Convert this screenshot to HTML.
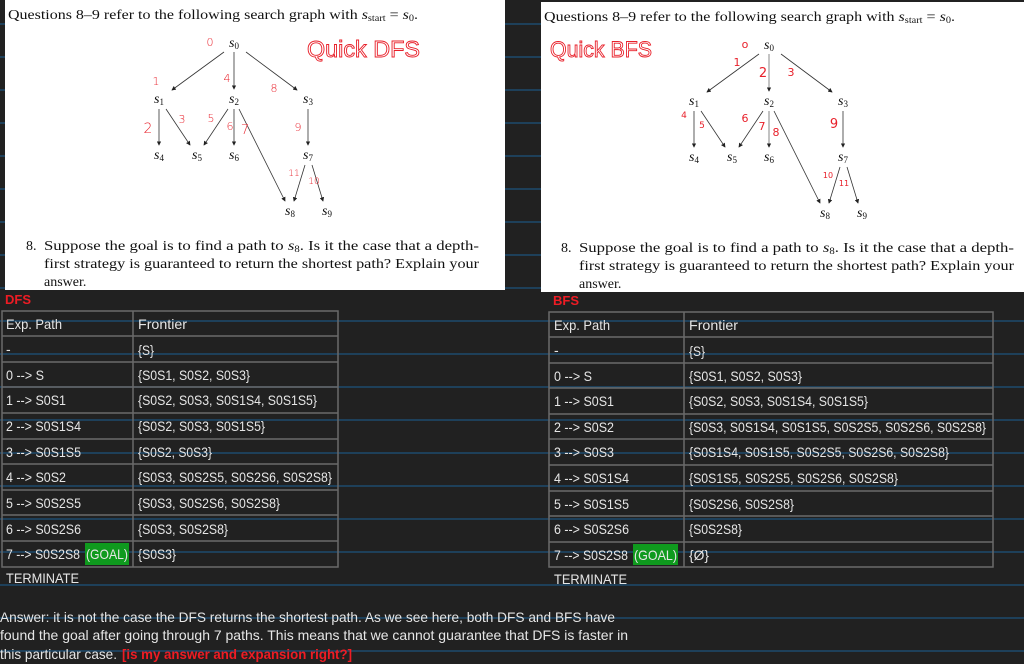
<!DOCTYPE html>
<html><head><meta charset="utf-8">
<style>
html,body{margin:0;padding:0;background:#212121;}
svg{display:block}
</style></head>
<body>
<svg width="1024" height="664" viewBox="0 0 1024 664" xmlns="http://www.w3.org/2000/svg">
<defs>
<marker id="ah" viewBox="0 0 6 6" refX="5" refY="3" markerWidth="4.5" markerHeight="4.5" markerUnits="userSpaceOnUse" orient="auto"><path d="M0,0 L6,3 L0,6 z" fill="#222"/></marker>
</defs>
<rect width="1024" height="664" fill="#212121"/>
<g stroke="#1d4a6d" stroke-width="1.5">
<line x1="0" y1="24" x2="1024" y2="24"/><line x1="0" y1="57" x2="1024" y2="57"/><line x1="0" y1="90" x2="1024" y2="90"/><line x1="0" y1="123" x2="1024" y2="123"/><line x1="0" y1="156" x2="1024" y2="156"/><line x1="0" y1="189" x2="1024" y2="189"/><line x1="0" y1="222" x2="1024" y2="222"/><line x1="0" y1="255" x2="1024" y2="255"/><line x1="0" y1="288" x2="1024" y2="288"/><line x1="0" y1="321" x2="1024" y2="321"/><line x1="0" y1="354" x2="1024" y2="354"/><line x1="0" y1="387" x2="1024" y2="387"/><line x1="0" y1="420" x2="1024" y2="420"/><line x1="0" y1="453" x2="1024" y2="453"/><line x1="0" y1="486" x2="1024" y2="486"/><line x1="0" y1="519" x2="1024" y2="519"/><line x1="0" y1="552" x2="1024" y2="552"/><line x1="0" y1="585" x2="1024" y2="585"/><line x1="0" y1="618" x2="1024" y2="618"/><line x1="0" y1="651" x2="1024" y2="651"/>
</g>

<rect x="5" y="0" width="500" height="290" fill="#fff"/>
<g font-family="Liberation Serif, serif" font-size="14" fill="#111">
<text x="8" y="19" textLength="410" lengthAdjust="spacingAndGlyphs">Questions 8–9 refer to the following search graph with <tspan font-style="italic">s</tspan><tspan font-size="9" dy="2">start</tspan><tspan dy="-2"> = </tspan><tspan font-style="italic">s</tspan><tspan font-size="9" dy="2">0</tspan><tspan dy="-2">.</tspan></text>
<text x="26" y="250">8.</text>
<text x="44" y="250" textLength="435" lengthAdjust="spacingAndGlyphs">Suppose the goal is to find a path to <tspan font-style="italic">s</tspan><tspan font-size="9" dy="2">8</tspan><tspan dy="-2">.  Is it the case that a depth-</tspan></text>
<text x="44" y="268" textLength="435" lengthAdjust="spacingAndGlyphs">first strategy is guaranteed to return the shortest path? Explain your</text>
<text x="44" y="286">answer.</text>
</g>
<g stroke="#333" stroke-width="0.8" marker-end="url(#ah)">
<line x1="224" y1="52" x2="172" y2="90"/><line x1="234" y1="52" x2="234" y2="89"/><line x1="246" y1="52" x2="297" y2="90"/>
<line x1="159" y1="109" x2="159" y2="145"/><line x1="166" y1="109" x2="190" y2="145"/><line x1="228" y1="109" x2="204" y2="145"/><line x1="234" y1="109" x2="234" y2="145"/><line x1="239" y1="109" x2="285" y2="201"/><line x1="308" y1="109" x2="308" y2="145"/><line x1="305" y1="165" x2="294" y2="201"/><line x1="312" y1="165" x2="323" y2="201"/>
</g>
<g font-family="Liberation Serif, serif" font-size="14" fill="#111" text-anchor="middle">
<text x="234" y="47"><tspan font-style="italic">s</tspan><tspan font-size="9" dy="2">0</tspan></text>
<text x="159" y="103"><tspan font-style="italic">s</tspan><tspan font-size="9" dy="2">1</tspan></text>
<text x="234" y="103"><tspan font-style="italic">s</tspan><tspan font-size="9" dy="2">2</tspan></text>
<text x="308" y="103"><tspan font-style="italic">s</tspan><tspan font-size="9" dy="2">3</tspan></text>
<text x="159" y="159"><tspan font-style="italic">s</tspan><tspan font-size="9" dy="2">4</tspan></text>
<text x="197" y="159"><tspan font-style="italic">s</tspan><tspan font-size="9" dy="2">5</tspan></text>
<text x="234" y="159"><tspan font-style="italic">s</tspan><tspan font-size="9" dy="2">6</tspan></text>
<text x="308" y="159"><tspan font-style="italic">s</tspan><tspan font-size="9" dy="2">7</tspan></text>
<text x="290" y="215"><tspan font-style="italic">s</tspan><tspan font-size="9" dy="2">8</tspan></text>
<text x="327" y="215"><tspan font-style="italic">s</tspan><tspan font-size="9" dy="2">9</tspan></text>
</g>
<g font-family="DejaVu Sans, sans-serif" font-size="11" fill="#e8202a" text-anchor="middle" font-weight="200">
<text x="210" y="46">0</text><text x="156" y="85">1</text><text x="227" y="82">4</text><text x="274" y="92">8</text>
<text x="148" y="133" font-size="14">2</text><text x="182" y="123">3</text><text x="211" y="122">5</text><text x="230" y="130">6</text><text x="245" y="134" font-size="13">7</text><text x="298" y="131">9</text><text x="294" y="176" font-size="9">11</text><text x="314" y="184" font-size="9">10</text>
</g>
<text x="307" y="57" font-family="Liberation Sans, sans-serif" font-size="23" fill="none" stroke="#e8202a" stroke-width="0.9" textLength="113" lengthAdjust="spacingAndGlyphs">Quick DFS</text>

<rect x="541" y="2" width="483" height="290" fill="#fff"/>
<g font-family="Liberation Serif, serif" font-size="14" fill="#111">
<text x="544" y="21" textLength="411" lengthAdjust="spacingAndGlyphs">Questions 8–9 refer to the following search graph with <tspan font-style="italic">s</tspan><tspan font-size="9" dy="2">start</tspan><tspan dy="-2"> = </tspan><tspan font-style="italic">s</tspan><tspan font-size="9" dy="2">0</tspan><tspan dy="-2">.</tspan></text>
<text x="561" y="252">8.</text>
<text x="579" y="252" textLength="435" lengthAdjust="spacingAndGlyphs">Suppose the goal is to find a path to <tspan font-style="italic">s</tspan><tspan font-size="9" dy="2">8</tspan><tspan dy="-2">.  Is it the case that a depth-</tspan></text>
<text x="579" y="270" textLength="435" lengthAdjust="spacingAndGlyphs">first strategy is guaranteed to return the shortest path? Explain your</text>
<text x="579" y="288">answer.</text>
</g>
<g transform="translate(535,2)">
<g stroke="#333" stroke-width="0.8" marker-end="url(#ah)">
<line x1="224" y1="52" x2="172" y2="90"/><line x1="234" y1="52" x2="234" y2="89" stroke="#aaa" stroke-width="1.4"/><line x1="246" y1="52" x2="297" y2="90"/>
<line x1="159" y1="109" x2="159" y2="145"/><line x1="166" y1="109" x2="190" y2="145"/><line x1="228" y1="109" x2="204" y2="145"/><line x1="234" y1="109" x2="234" y2="145" stroke="#999" stroke-width="1.2"/><line x1="239" y1="109" x2="285" y2="201"/><line x1="308" y1="109" x2="308" y2="145"/><line x1="305" y1="165" x2="294" y2="201"/><line x1="312" y1="165" x2="323" y2="201"/>
</g>
<g font-family="Liberation Serif, serif" font-size="14" fill="#111" text-anchor="middle">
<text x="234" y="47"><tspan font-style="italic">s</tspan><tspan font-size="9" dy="2">0</tspan></text>
<text x="159" y="103"><tspan font-style="italic">s</tspan><tspan font-size="9" dy="2">1</tspan></text>
<text x="234" y="103"><tspan font-style="italic">s</tspan><tspan font-size="9" dy="2">2</tspan></text>
<text x="308" y="103"><tspan font-style="italic">s</tspan><tspan font-size="9" dy="2">3</tspan></text>
<text x="159" y="159"><tspan font-style="italic">s</tspan><tspan font-size="9" dy="2">4</tspan></text>
<text x="197" y="159"><tspan font-style="italic">s</tspan><tspan font-size="9" dy="2">5</tspan></text>
<text x="234" y="159"><tspan font-style="italic">s</tspan><tspan font-size="9" dy="2">6</tspan></text>
<text x="308" y="159"><tspan font-style="italic">s</tspan><tspan font-size="9" dy="2">7</tspan></text>
<text x="290" y="215"><tspan font-style="italic">s</tspan><tspan font-size="9" dy="2">8</tspan></text>
<text x="327" y="215"><tspan font-style="italic">s</tspan><tspan font-size="9" dy="2">9</tspan></text>
</g>
</g>
<g font-family="DejaVu Sans, sans-serif" font-size="11" fill="#e8202a" text-anchor="middle">
<text x="745" y="48">o</text><text x="737" y="66">1</text><text x="763" y="77" font-size="13">2</text><text x="791" y="76">3</text>
<text x="684" y="118" font-size="9">4</text><text x="702" y="128" font-size="9">5</text><text x="745" y="122">6</text><text x="762" y="130">7</text><text x="776" y="136">8</text><text x="834" y="128" font-size="13">9</text><text x="828" y="178" font-size="8">10</text><text x="844" y="186" font-size="8">11</text>
</g>
<text x="550" y="57" font-family="Liberation Sans, sans-serif" font-size="22" fill="none" stroke="#e8202a" stroke-width="0.9" textLength="102" lengthAdjust="spacingAndGlyphs">Quick BFS</text>

<text x="5" y="304" font-family="Liberation Sans, sans-serif" font-weight="bold" font-size="13" fill="#ee1c24">DFS</text>
<text x="553" y="305" font-family="Liberation Sans, sans-serif" font-weight="bold" font-size="13" fill="#ee1c24">BFS</text>

<g stroke="#6a6a6a" stroke-width="1.5" fill="none">
<rect x="2" y="311" width="336" height="256"/>
<line x1="133" y1="311" x2="133" y2="567"/>
<line x1="2" y1="336" x2="338" y2="336"/><line x1="2" y1="362" x2="338" y2="362"/><line x1="2" y1="387" x2="338" y2="387"/><line x1="2" y1="413" x2="338" y2="413"/><line x1="2" y1="439" x2="338" y2="439"/><line x1="2" y1="464" x2="338" y2="464"/><line x1="2" y1="490" x2="338" y2="490"/><line x1="2" y1="515" x2="338" y2="515"/><line x1="2" y1="541" x2="338" y2="541"/>
</g>
<rect x="85" y="543" width="44" height="22" fill="#0f9a1e"/>
<g font-family="Liberation Sans, sans-serif" font-size="14" fill="#e6e6e6">
<text x="6" y="329" textLength="56" lengthAdjust="spacingAndGlyphs">Exp. Path</text><text x="138" y="329" textLength="49" lengthAdjust="spacingAndGlyphs">Frontier</text>
<text x="6" y="354">-</text><text x="138" y="355" textLength="16" lengthAdjust="spacingAndGlyphs">{S}</text>
<text x="6" y="380" textLength="38" lengthAdjust="spacingAndGlyphs">0 --&gt; S</text><text x="138" y="380" textLength="112" lengthAdjust="spacingAndGlyphs">{S0S1, S0S2, S0S3}</text>
<text x="6" y="405" textLength="60" lengthAdjust="spacingAndGlyphs">1 --&gt; S0S1</text><text x="138" y="405" textLength="179" lengthAdjust="spacingAndGlyphs">{S0S2, S0S3, S0S1S4, S0S1S5}</text>
<text x="6" y="431" textLength="75" lengthAdjust="spacingAndGlyphs">2 --&gt; S0S1S4</text><text x="138" y="431" textLength="127" lengthAdjust="spacingAndGlyphs">{S0S2, S0S3, S0S1S5}</text>
<text x="6" y="457" textLength="75" lengthAdjust="spacingAndGlyphs">3 --&gt; S0S1S5</text><text x="138" y="457" textLength="74" lengthAdjust="spacingAndGlyphs">{S0S2, S0S3}</text>
<text x="6" y="482" textLength="60" lengthAdjust="spacingAndGlyphs">4 --&gt; S0S2</text><text x="138" y="482" textLength="194" lengthAdjust="spacingAndGlyphs">{S0S3, S0S2S5, S0S2S6, S0S2S8}</text>
<text x="6" y="508" textLength="75" lengthAdjust="spacingAndGlyphs">5 --&gt; S0S2S5</text><text x="138" y="508" textLength="142" lengthAdjust="spacingAndGlyphs">{S0S3, S0S2S6, S0S2S8}</text>
<text x="6" y="534" textLength="75" lengthAdjust="spacingAndGlyphs">6 --&gt; S0S2S6</text><text x="138" y="534" textLength="90" lengthAdjust="spacingAndGlyphs">{S0S3, S0S2S8}</text>
<text x="6" y="559" textLength="74" lengthAdjust="spacingAndGlyphs">7 --&gt; S0S2S8</text><text x="86" y="559" textLength="42" lengthAdjust="spacingAndGlyphs">(GOAL)</text><text x="138" y="559" textLength="38" lengthAdjust="spacingAndGlyphs">{S0S3}</text>
<text x="6" y="583" textLength="73" lengthAdjust="spacingAndGlyphs">TERMINATE</text>
</g>

<g stroke="#6a6a6a" stroke-width="1.5" fill="none">
<rect x="549" y="312" width="444" height="255"/>
<line x1="684" y1="312" x2="684" y2="567"/>
<line x1="549" y1="337" x2="993" y2="337"/><line x1="549" y1="363" x2="993" y2="363"/><line x1="549" y1="388" x2="993" y2="388"/><line x1="549" y1="414" x2="993" y2="414"/><line x1="549" y1="439" x2="993" y2="439"/><line x1="549" y1="465" x2="993" y2="465"/><line x1="549" y1="491" x2="993" y2="491"/><line x1="549" y1="516" x2="993" y2="516"/><line x1="549" y1="542" x2="993" y2="542"/>
</g>
<rect x="633" y="544" width="45" height="21" fill="#0f9a1e"/>
<g font-family="Liberation Sans, sans-serif" font-size="14" fill="#e6e6e6">
<text x="554" y="330" textLength="56" lengthAdjust="spacingAndGlyphs">Exp. Path</text><text x="689" y="330" textLength="49" lengthAdjust="spacingAndGlyphs">Frontier</text>
<text x="554" y="355">-</text><text x="689" y="356" textLength="16" lengthAdjust="spacingAndGlyphs">{S}</text>
<text x="554" y="381" textLength="38" lengthAdjust="spacingAndGlyphs">0 --&gt; S</text><text x="689" y="381" textLength="113" lengthAdjust="spacingAndGlyphs">{S0S1, S0S2, S0S3}</text>
<text x="554" y="406" textLength="60" lengthAdjust="spacingAndGlyphs">1 --&gt; S0S1</text><text x="689" y="406" textLength="179" lengthAdjust="spacingAndGlyphs">{S0S2, S0S3, S0S1S4, S0S1S5}</text>
<text x="554" y="432" textLength="60" lengthAdjust="spacingAndGlyphs">2 --&gt; S0S2</text><text x="689" y="432" textLength="297" lengthAdjust="spacingAndGlyphs">{S0S3, S0S1S4, S0S1S5, S0S2S5, S0S2S6, S0S2S8}</text>
<text x="554" y="457" textLength="60" lengthAdjust="spacingAndGlyphs">3 --&gt; S0S3</text><text x="689" y="457" textLength="260" lengthAdjust="spacingAndGlyphs">{S0S1S4, S0S1S5, S0S2S5, S0S2S6, S0S2S8}</text>
<text x="554" y="483" textLength="75" lengthAdjust="spacingAndGlyphs">4 --&gt; S0S1S4</text><text x="689" y="483" textLength="209" lengthAdjust="spacingAndGlyphs">{S0S1S5, S0S2S5, S0S2S6, S0S2S8}</text>
<text x="554" y="509" textLength="75" lengthAdjust="spacingAndGlyphs">5 --&gt; S0S1S5</text><text x="689" y="509" textLength="105" lengthAdjust="spacingAndGlyphs">{S0S2S6, S0S2S8}</text>
<text x="554" y="534" textLength="75" lengthAdjust="spacingAndGlyphs">6 --&gt; S0S2S6</text><text x="689" y="534" textLength="53" lengthAdjust="spacingAndGlyphs">{S0S2S8}</text>
<text x="554" y="560" textLength="74" lengthAdjust="spacingAndGlyphs">7 --&gt; S0S2S8</text><text x="634" y="560" textLength="43" lengthAdjust="spacingAndGlyphs">(GOAL)</text><text x="689" y="560" textLength="20" lengthAdjust="spacingAndGlyphs">{Ø}</text>
<text x="554" y="584" textLength="73" lengthAdjust="spacingAndGlyphs">TERMINATE</text>
</g>

<g font-family="Liberation Sans, sans-serif" font-size="14" fill="#e6e6e6">
<text x="0" y="622" textLength="615" lengthAdjust="spacingAndGlyphs">Answer: it is not the case the DFS returns the shortest path. As we see here, both DFS and BFS have</text>
<text x="0" y="640" textLength="628" lengthAdjust="spacingAndGlyphs">found the goal after going through 7 paths. This means that we cannot guarantee that DFS is faster in</text>
<text x="0" y="659" textLength="117" lengthAdjust="spacingAndGlyphs">this particular case.</text>
<text x="122" y="659" textLength="230" lengthAdjust="spacingAndGlyphs" fill="#ee1c24" font-weight="bold">[is my answer and expansion right?]</text>
</g>
</svg>
</body></html>
